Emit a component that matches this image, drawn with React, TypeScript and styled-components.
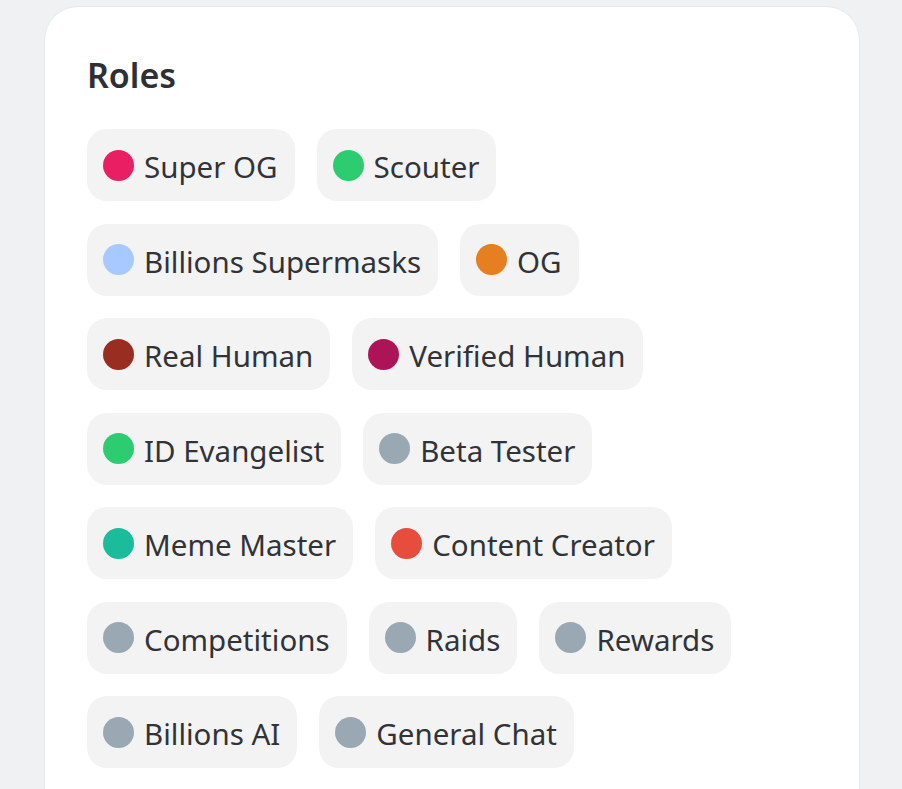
import React from 'react';
import styled, { createGlobalStyle } from 'styled-components';

const GlobalStyle = createGlobalStyle`
  body {
    margin: 0;
    background: #f0f1f3;
    font-family: 'Noto Sans', 'Liberation Sans', sans-serif;
    color: #313338;
  }
`;

const Page = styled.div`
  height: 100vh;
  overflow: hidden;
  padding: 6px 42px 0 44px;
  box-sizing: border-box;
`;

const Card = styled.section`
  background: #ffffff;
  border: 1px solid #e7e8eb;
  border-radius: 34px;
  padding: 46px 40px 60px 42px;
  min-height: 820px;
  box-sizing: border-box;
`;

const Title = styled.h2`
  margin: 0 0 32px;
  font-size: 34px;
  line-height: 44px;
  font-weight: 600;
  color: #2e3035;
`;

const RoleList = styled.div`
  display: flex;
  flex-wrap: wrap;
  gap: 22.5px 22px;
`;

const Chip = styled.div`
  display: inline-flex;
  align-items: center;
  gap: 10px;
  height: 72px;
  padding: 0 17px 0 16px;
  box-sizing: border-box;
  background: #f3f3f4;
  border-radius: 20px;
  font-size: 29.5px;
  color: #313338;
`;

const Label = styled.span`
  padding-top: 3px;
  white-space: nowrap;
`;

const Dot = styled.span<{ color: string }>`
  width: 31px;
  height: 31px;
  border-radius: 50%;
  flex-shrink: 0;
  background: ${({ color }) => color};
`;

const GREY = '#99a8b3';

const roles = [
  { name: 'Super OG', color: '#e91e63' },
  { name: 'Scouter', color: '#2ecc71' },
  { name: 'Billions Supermasks', color: '#a8c9ff' },
  { name: 'OG', color: '#e67e22' },
  { name: 'Real Human', color: '#992d22' },
  { name: 'Verified Human', color: '#ad1457' },
  { name: 'ID Evangelist', color: '#2ecc71' },
  { name: 'Beta Tester', color: GREY },
  { name: 'Meme Master', color: '#1abc9c' },
  { name: 'Content Creator', color: '#e74c3c' },
  { name: 'Competitions', color: GREY },
  { name: 'Raids', color: GREY },
  { name: 'Rewards', color: GREY },
  { name: 'Billions AI', color: GREY },
  { name: 'General Chat', color: GREY },
];

const App: React.FC = () => (
  <>
    <GlobalStyle />
    <Page>
      <Card>
        <Title>Roles</Title>
        <RoleList>
          {roles.map((role) => (
            <Chip key={role.name}>
              <Dot color={role.color} />
              <Label>{role.name}</Label>
            </Chip>
          ))}
        </RoleList>
      </Card>
    </Page>
  </>
);

export default App;
